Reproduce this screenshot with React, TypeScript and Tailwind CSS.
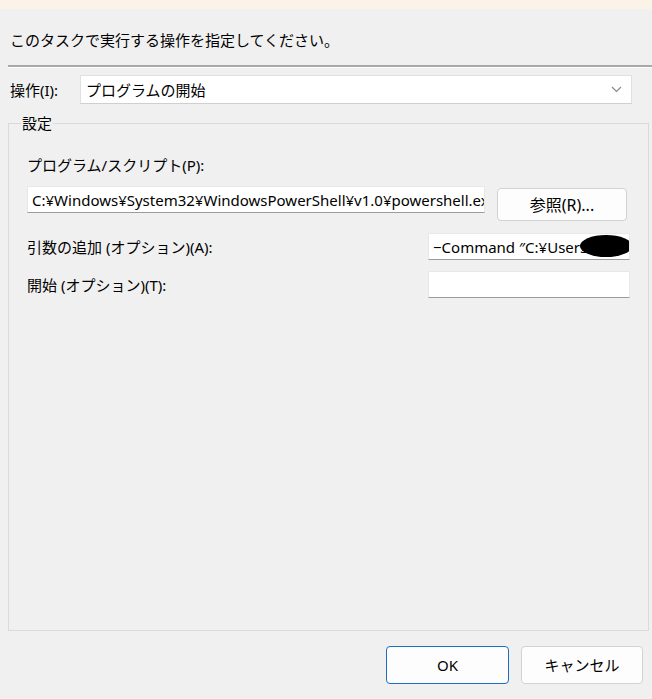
import React from 'react';

const font = "font-['Noto_Sans','Noto_Sans_CJK_JP',sans-serif]";

const TextBox: React.FC<{ value?: string; className?: string; children?: React.ReactNode }> = ({
  value,
  className,
  children,
}) => (
  <div
    className={`relative flex h-[27px] shrink-0 items-center overflow-hidden whitespace-nowrap border border-[#e8e8e8] border-b-[#9c9c9c] bg-white pl-[4px] text-[15px] text-black ${className ?? ''}`}
  >
    {value}
    {children}
  </div>
);

const Button: React.FC<{ label: string; primary?: boolean; className?: string }> = ({
  label,
  primary,
  className,
}) => (
  <button
    className={`flex shrink-0 items-center justify-center rounded-[4px] border bg-[#fdfdfd] text-[15px] text-black ${
      primary ? 'border-[#1b6fc2]' : 'border-[#d2d2d2]'
    } ${className ?? ''}`}
  >
    {label}
  </button>
);

export default function App() {
  return (
    <div className={`flex h-[699px] w-[652px] flex-col overflow-hidden bg-[#f0f0f0] text-[15px] leading-[20px] text-black ${font}`}>
      <div className="h-[9px] bg-[#fbf2e8]" />

      {/* ヘッダー */}
      <div className="mt-[21px] pl-[10px]">このタスクで実行する操作を指定してください。</div>
      <div className="ml-[8px] mt-[15px] border-t-2 border-b border-t-[#a9a9a9] border-b-white" />

      {/* 操作 */}
      <div className="mt-[7px] flex items-center pl-[10px] pr-[20px]">
        <span className="w-[70px]">操作(I):</span>
        <div className="flex h-[29px] flex-1 items-center justify-between border border-[#e0e0e0] border-b-[#cfcfcf] bg-white pl-[5px] pr-[9px]">
          <span>プログラムの開始</span>
          <svg width="11" height="7" viewBox="0 0 11 7">
            <polyline points="1,1 5.5,5.5 10,1" fill="none" stroke="#8a8a8a" strokeWidth="1.2" />
          </svg>
        </div>
      </div>

      {/* 設定 */}
      <fieldset className="ml-[8px] mt-[9px] w-[641px] min-w-0 flex-1 border border-[#dadada] px-0">
        <legend className="ml-[12px] px-[1px] leading-[20px]">設定</legend>
        <div className="w-[621px] pl-[18px]">
          <div className="mt-[22px]">プログラム/スクリプト(P):</div>
          <div className="mt-[11px] flex items-start gap-[12px]">
            <TextBox
              className="w-[458px]"
              value="C:¥Windows¥System32¥WindowsPowerShell¥v1.0¥powershell.exe"
            />
            <Button label="参照(R)..." className="mt-[2px] h-[33px] w-[130px] text-[16px]" />
          </div>
          <div className="mt-[12px] flex items-center">
            <span className="flex-1">引数の追加 (オプション)(A):</span>
            <TextBox className="w-[202px]" value={'−Command ″C:¥Users¥'}>
              <svg className="absolute right-[-4px] top-[0px]" width="54" height="26" viewBox="0 0 54 26">
                <ellipse cx="27" cy="12" rx="26" ry="11" fill="#000" />
              </svg>
            </TextBox>
          </div>
          <div className="mt-[11px] flex items-center">
            <span className="flex-1">開始 (オプション)(T):</span>
            <TextBox className="w-[202px]" />
          </div>
        </div>
      </fieldset>

      {/* ボタン */}
      <div className="flex justify-end gap-[12px] pb-[15px] pr-[9px] pt-[15px]">
        <Button label="OK" primary className="h-[38px] w-[123px]" />
        <Button label="キャンセル" className="h-[38px] w-[122px]" />
      </div>
    </div>
  );
}
